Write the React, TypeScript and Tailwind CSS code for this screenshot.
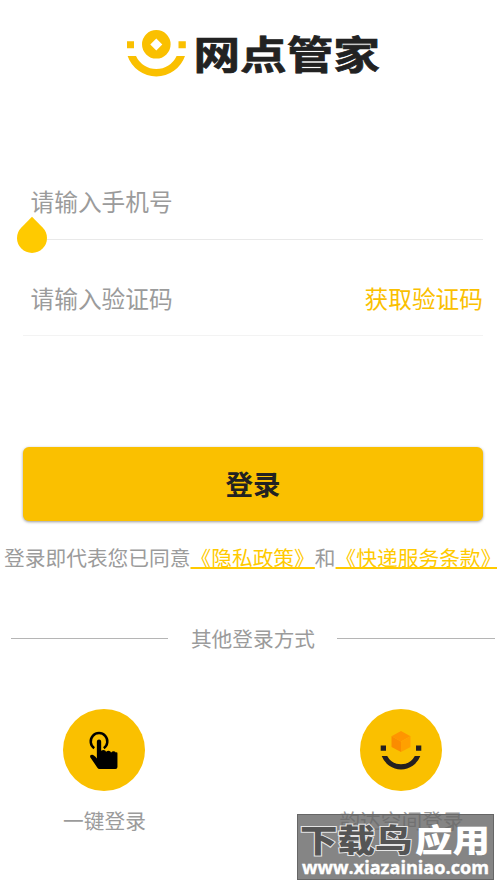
import type { ReactNode } from "react";

function BrandMark() {
  return (
    <svg className="h-[50px] w-[60px] shrink-0" viewBox="127 28 60 50" fill="#fac000" role="img" aria-label="logo">
      <path fillRule="evenodd" d="M156.3 30a14.3 14.3 0 1 1 0 28.6a14.3 14.3 0 0 1 0-28.6ZM156.3 38.4l-6 6l6 6l6-6Z" />
      <path d="M127 41.2h7v7h-7zM178.5 41.2h7.3v7h-7.3z" />
      <path d="M127.6 56H136A22.3 22.3 0 0 0 176.6 56H185A30.4 30.4 0 0 1 127.6 56Z" />
    </svg>
  );
}

function Wordmark() {
  return (
    <svg className="h-[60px] w-[200px] shrink-0 overflow-visible" viewBox="0 0 200 60">
      <text
        transform="translate(0.5 41) scale(1.11 0.91)"
        fontSize="42"
        fontWeight="700"
        fill="#222"
        stroke="#222"
        strokeWidth="0.8"
        className="font-['Noto_Sans_CJK_SC',sans-serif]"
      >
        网点管家
      </text>
    </svg>
  );
}

function TapIcon() {
  return (
    <svg className="size-[82px]" viewBox="39 42 247 247">
      <circle cx="162.5" cy="165.500" r="123.500" fill="#fac000" />
      <path d="M133 160A25 25 0 1 1 162 160" fill="none" stroke="#000" strokeWidth="7.500" />
      <path d="M141 140a6.500 6.500 0 0 1 13 0V168q7-5 13 0q1 3 2 3q6-6 13-1q1 3 2 3q5-6 11-3q2 1 3 3q5-3 5 3V217q0 6-6 6H149q-4 0-7-5L121 187q-2-7 6-7q5 0 14 11Z" />
    </svg>
  );
}

function SpaceIcon() {
  return (
    <svg className="size-[82px]" viewBox="0 0 82 82">
      <circle cx="41" cy="41" r="41" fill="#fac000" />
      <path d="M41 22l9.500 5.300L41 32.500l-9.500-5.200Z" fill="#ff9500" />
      <path d="M31.500 27.300L41 32.500V43l-9.500-5Z" fill="#fb8c00" />
      <path d="M50.500 27.300L41 32.500V43l9.500-5Z" fill="#ffa000" />
      <path d="M20.700 36.500H26v5.200h-5.300zM56 36.500h5.300v5.200H56z" fill="#231f20" />
      <path d="M21.700 47H27.200A15.600 15.600 0 0 0 54.800 47H60.300A20.600 20.600 0 0 1 21.700 47Z" fill="#231f20" />
    </svg>
  );
}

function LoginOption({ icon, label }: { icon: ReactNode; label: string }) {
  return (
    <button className="flex w-[126px] flex-col items-center">
      {icon}
      <span className="mt-[14px] whitespace-nowrap pl-px text-[20.7px] leading-[30px]">{label}</span>
    </button>
  );
}

function Watermark() {
  return (
    <div className="absolute left-[297px] top-[814px] h-[66px] w-[197px] border border-[#666] bg-[#666]/80">
      <svg className="block h-full w-full overflow-visible" viewBox="298 815 195 64">
        <g className="font-['Noto_Sans_CJK_SC',sans-serif]" fontSize="33.500" fontWeight="900">
          <text transform="translate(300 852) scale(1.12 0.95)" fill="#555" stroke="#e5e5e5" strokeWidth="2" paintOrder="stroke">
            下载鸟
          </text>
          <text transform="translate(415 852) scale(1.12 0.95)" fill="#fff">
            应用
          </text>
        </g>
        <text
          x="302"
          y="873.5"
          textLength="187"
          lengthAdjust="spacingAndGlyphs"
          fontSize="18.500"
          fontWeight="700"
          fill="#fff"
          stroke="#fff"
          strokeWidth="0.4"
          className="font-['Open_Sans',sans-serif]"
        >
          www.xiazainiao.com
        </text>
      </svg>
    </div>
  );
}

export default function App() {
  return (
    <main className="relative flex h-[883px] w-[497px] flex-col overflow-hidden bg-white font-['Noto_Sans_CJK_SC',sans-serif] text-[#9b9b9b]">
      <header className="flex h-[78px] items-start gap-[6px] pl-[127px] pt-[28px]">
        <BrandMark />
        <Wordmark />
      </header>

      <section className="mt-[86px] pl-[23px] pr-[14px]">
        <div className="relative flex h-[76px] items-center border-b border-[#e9e9e9] pb-px pl-[7.500px] text-[23.7px] leading-[34px]">
          <span>请输入手机号</span>
          <span className="absolute -bottom-[14px] -left-[6px] size-[30px] rotate-45 rounded-full rounded-tl-none bg-[#ffca00]" />
        </div>
        <div className="mt-5 flex h-[76px] items-center justify-between border-b border-[#f3f3f3] pl-[7.500px] text-[23.7px] leading-[34px]">
          <span>请输入验证码</span>
          <button className="text-[#fac000]">获取验证码</button>
        </div>
      </section>

      <button className="ml-[23px] mt-[111px] h-[74px] w-[460px] shrink-0 rounded-[6px] bg-[#fac000] pb-[2px] text-[27.5px] font-bold leading-[40px] text-[#222] shadow-[0_1px_3px_rgba(0,0,0,0.4)]">
        登录
      </button>

      <p className="mt-[21px] whitespace-nowrap pl-1 text-[20.73px] leading-[30px]">
        登录即代表您已同意
        <a className="text-[#ffca00] underline decoration-[#ffca00] decoration-[1.5px] underline-offset-1">《隐私政策》</a>
        和
        <a className="text-[#ffca00] underline decoration-[#ffca00] decoration-[1.5px] underline-offset-1">《快递服务条款》</a>
      </p>

      <div className="mt-[51px] flex items-center pl-[11px] text-[20.7px] leading-[30px]">
        <span className="h-px w-[157px] bg-[#b5b5b5]" />
        <span className="w-[169px] whitespace-nowrap pl-px text-center">其他登录方式</span>
        <span className="h-px w-[158px] bg-[#b5b5b5]" />
      </div>

      <div className="mt-[56px] flex justify-between pl-[41px] pr-[33px]">
        <LoginOption icon={<TapIcon />} label="一键登录" />
        <LoginOption icon={<SpaceIcon />} label="韵达空间登录" />
      </div>
      <Watermark />
    </main>
  );
}
